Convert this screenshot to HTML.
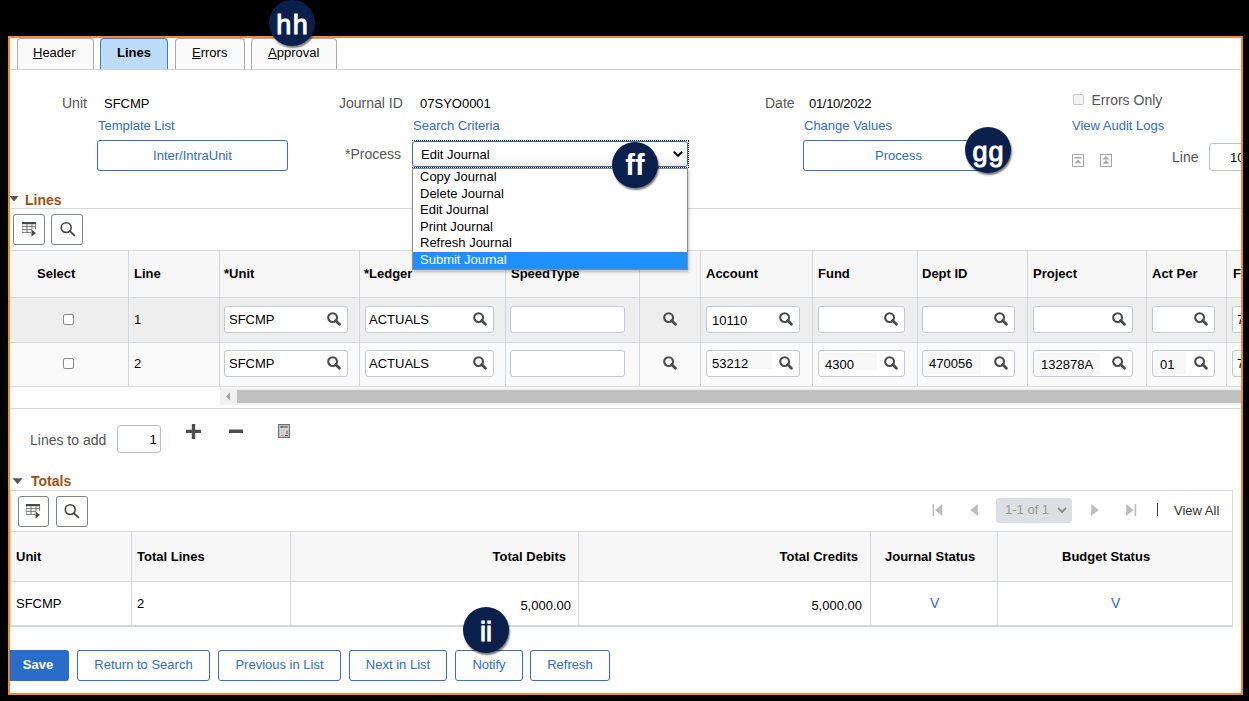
<!DOCTYPE html>
<html><head><meta charset="utf-8">
<style>
*{box-sizing:border-box;margin:0;padding:0}
html,body{width:1249px;height:701px;overflow:hidden;background:#000;font-family:"Liberation Sans",sans-serif;}
#frame{position:absolute;left:8px;top:36px;width:1236px;height:659px;background:#fff;border:2px solid #f7882f;}
.a{position:absolute}
.t{position:absolute;white-space:nowrap;line-height:13px;font-size:13px;color:#000}
.l{position:absolute;white-space:nowrap;line-height:14px;font-size:14px;color:#555}
.b{font-weight:bold}
.lnk{color:#2f6cc9}
.tab{position:absolute;top:38px;height:32px;background:#fafafa;border:1px solid #a9a9a9;border-bottom:none;border-radius:4px 4px 0 0}
.tab.on{background:#bcdcf8;border-color:#3a7bd5}
.btn{position:absolute;border:1px solid #3270cc;border-radius:3px;background:#fff;color:#2f6cc9;font-size:13px;text-align:center;line-height:28px;white-space:nowrap}
.hl{position:absolute;background:#d3d8de;height:1px}
.vl{position:absolute;background:#d3d8de;width:1px}
.inp{position:absolute;background:#fff;border:1px solid #c2c9d2;border-radius:3px;height:27px}
.badge{position:absolute;width:46px;height:46px;border-radius:50%;background:#0a1f4c;box-shadow:1px 2px 2px rgba(0,0,0,0.55);color:#fff;text-align:center;font-size:27px;font-weight:normal;-webkit-text-stroke:1px #fff;line-height:50px}
.ttl{font-size:14px;line-height:14px;color:#a0500f}
.ibtn{position:absolute;width:32px;height:31px;border:1px solid #7d848c;border-radius:3px;background:#fff}
</style></head><body>
<div id="frame"></div>
<svg width="0" height="0" style="position:absolute">
<defs>
<symbol id="lookico" viewBox="0 0 14 14"><circle cx="5.6" cy="5.6" r="4.4" stroke="#4a4a4a" stroke-width="2.1" fill="none"/><path d="M8.6 8.6 L12.4 12.2" stroke="#4a4a4a" stroke-width="2.8" stroke-linecap="round"/></symbol>
<symbol id="searchico" viewBox="0 0 17 17"><circle cx="7.2" cy="6.6" r="4.9" stroke="#444" stroke-width="1.6" fill="none"/><path d="M10.8 10.2 L15.4 14.4" stroke="#444" stroke-width="1.8" stroke-linecap="round"/></symbol>
<symbol id="gridico" viewBox="0 0 15 15"><rect x="0" y="0" width="14" height="2.2" fill="#4a4a4a"/><path d="M0 2 V11 M5 2 V11 M10 2 V7 M13.6 2 V7 M0 4.6 H14 M0 7.4 H10 M0 10.4 H9" stroke="#777" stroke-width="1" fill="none"/><path d="M9.5 7.5 L14 11 L9.5 14.5Z" fill="#4a4a4a"/></symbol>
</defs></svg>


<!-- tabs -->
<div class="tab" style="left:17px;width:77px"></div>
<div class="tab on" style="left:100px;width:68px"></div>
<div class="tab" style="left:175px;width:70px"></div>
<div class="tab" style="left:251px;width:86px"></div>
<div class="hl" style="left:10px;top:69px;width:1232px;background:#c9d0d8"></div>
<div class="t" style="left:33px;top:46px"><u>H</u>eader</div>
<div class="t b" style="left:117px;top:46px">Lines</div>
<div class="t" style="left:192px;top:46px"><u>E</u>rrors</div>
<div class="t" style="left:268px;top:46px"><u>A</u>pproval</div>

<!-- header fields -->
<div class="l" style="left:62px;top:96px">Unit</div>
<div class="t" style="left:104px;top:97px">SFCMP</div>
<div class="t lnk" style="left:98px;top:119px">Template List</div>
<div class="btn" style="left:97px;top:140px;width:191px;height:31px;line-height:30px">Inter/IntraUnit</div>

<div class="l" style="left:339px;top:96px">Journal ID</div>
<div class="t" style="left:420px;top:97px">07SYO0001</div>
<div class="t lnk" style="left:413px;top:119px">Search Criteria</div>
<div class="l" style="left:345px;top:147px">*Process</div>
<div class="a" style="left:412px;top:140px;width:277px;height:28px;border:1px dotted #222;border-left:none"></div><div class="a" style="left:412px;top:141px;width:276px;height:26px;border:1.5px solid #2a6ad2;border-radius:3px;background:linear-gradient(#fff 55%,#ededed)"></div>
<div class="t" style="left:421px;top:148px">Edit Journal</div>
<svg class="a" style="left:672px;top:150px" width="12" height="8" viewBox="0 0 12 8"><path d="M1.8 1.6 L6 5.8 L10.2 1.6" stroke="#000" stroke-width="2" fill="none"/></svg>

<div class="l" style="left:765px;top:96px">Date</div>
<div class="t" style="left:809px;top:97px;letter-spacing:-0.3px">01/10/2022</div>
<div class="t lnk" style="left:804px;top:119px">Change Values</div>
<div class="btn" style="left:803px;top:140px;width:191px;height:31px;line-height:30px">Process</div>

<div class="a" style="left:1073px;top:94px;width:11px;height:11px;border:1px solid #c8c8c8;border-radius:2px;background:#f4f4f4"></div>
<div class="l" style="left:1091.5px;top:93px">Errors Only</div>
<div class="t lnk" style="left:1072px;top:119px">View Audit Logs</div>
<svg class="a" style="left:1072px;top:154px" width="13" height="13" viewBox="0 0 13 13"><rect x="0.5" y="0.5" width="11" height="12" fill="#fff" stroke="#a8a8a8"/><rect x="2.6" y="2.8" width="6.8" height="1.8" fill="#acacac"/><path d="M2.6 9.2 L6 5.4 L9.4 9.2Z" fill="#acacac"/></svg>
<svg class="a" style="left:1100px;top:154px" width="13" height="13" viewBox="0 0 13 13"><rect x="0.5" y="0.5" width="11" height="12" fill="#fff" stroke="#a8a8a8"/><path d="M2.4 5.6 L5.9 2 L9.4 5.6Z M2.4 9.8 L5.9 6 L9.4 9.8Z" fill="#acacac"/></svg>
<div class="l" style="left:1172px;top:150px">Line</div>
<div class="inp" style="left:1209px;top:143px;width:60px;height:28px;border-color:#b9c2cc"></div>
<div class="t" style="left:1230px;top:151px">10</div>

<!-- Lines section -->
<svg class="a" style="left:9px;top:196px" width="10" height="6" viewBox="0 0 10 6"><path d="M0.5 0 L9.5 0 L5 5.5Z" fill="#555"/></svg>
<div class="t b ttl" style="left:25px;top:193px">Lines</div>
<div class="hl" style="left:10px;top:208px;width:1232px"></div>
<div class="ibtn" style="left:13px;top:214px"><svg class="a" style="left:8px;top:7px" width="15" height="15" viewBox="0 0 15 15"><use href="#gridico"/></svg></div>
<div class="ibtn" style="left:51px;top:214px"><svg class="a" style="left:7px;top:6px" width="17" height="17" viewBox="0 0 17 17"><use href="#searchico"/></svg></div>
<div class="a" style="left:10px;top:250px;width:1232px;height:47px;background:#f7f7f7"></div>
<div class="a" style="left:10px;top:297px;width:1232px;height:45px;background:#eeeeee"></div>
<div class="a" style="left:10px;top:342px;width:1232px;height:44px;background:#fafafa"></div>
<div class="hl" style="left:10px;top:250px;width:1232px"></div>
<div class="hl" style="left:10px;top:297px;width:1232px"></div>
<div class="hl" style="left:10px;top:342px;width:1232px"></div>
<div class="hl" style="left:10px;top:386px;width:1232px"></div>
<div class="vl" style="left:128px;top:250px;height:136px"></div>
<div class="vl" style="left:219px;top:250px;height:136px"></div>
<div class="vl" style="left:359px;top:250px;height:136px"></div>
<div class="vl" style="left:505px;top:250px;height:136px"></div>
<div class="vl" style="left:639px;top:250px;height:136px"></div>
<div class="vl" style="left:700px;top:250px;height:136px"></div>
<div class="vl" style="left:812px;top:250px;height:136px"></div>
<div class="vl" style="left:917px;top:250px;height:136px"></div>
<div class="vl" style="left:1027px;top:250px;height:136px"></div>
<div class="vl" style="left:1146px;top:250px;height:136px"></div>
<div class="vl" style="left:1226px;top:250px;height:136px"></div>
<div class="t b" style="left:37px;top:267px">Select</div>
<div class="t b" style="left:134px;top:267px">Line</div>
<div class="t b" style="left:224px;top:267px">*Unit</div>
<div class="t b" style="left:364px;top:267px">*Ledger</div>
<div class="t b" style="left:511px;top:267px">SpeedType</div>
<div class="t b" style="left:706px;top:267px">Account</div>
<div class="t b" style="left:818px;top:267px">Fund</div>
<div class="t b" style="left:922px;top:267px">Dept ID</div>
<div class="t b" style="left:1033px;top:267px">Project</div>
<div class="t b" style="left:1152px;top:267px">Act Per</div>
<div class="t b" style="left:1233px;top:267px">F</div>
<div class="a" style="left:63px;top:314px;width:11px;height:11px;border:1px solid #8a8a8a;border-radius:2px;background:#fff"></div>
<div class="t" style="left:134px;top:313px">1</div>
<div class="inp" style="left:224px;top:306px;width:124px"></div>
<div class="t" style="left:229px;top:313px">SFCMP</div>
<svg class="a" style="left:327px;top:312px" width="14" height="14" viewBox="0 0 14 14"><use href="#lookico"/></svg>
<div class="inp" style="left:365px;top:306px;width:129px"></div>
<div class="t" style="left:369px;top:313px">ACTUALS</div>
<svg class="a" style="left:473px;top:312px" width="14" height="14" viewBox="0 0 14 14"><use href="#lookico"/></svg>
<div class="inp" style="left:510px;top:306px;width:115px"></div>
<div class="inp" style="left:706px;top:306px;width:94px"></div>
<div class="t" style="left:712px;top:314px">10110</div>
<svg class="a" style="left:779px;top:312px" width="14" height="14" viewBox="0 0 14 14"><use href="#lookico"/></svg>
<div class="inp" style="left:818px;top:306px;width:87px"></div>
<svg class="a" style="left:884px;top:312px" width="14" height="14" viewBox="0 0 14 14"><use href="#lookico"/></svg>
<div class="inp" style="left:922px;top:306px;width:93px"></div>
<svg class="a" style="left:994px;top:312px" width="14" height="14" viewBox="0 0 14 14"><use href="#lookico"/></svg>
<div class="inp" style="left:1033px;top:306px;width:100px"></div>
<svg class="a" style="left:1112px;top:312px" width="14" height="14" viewBox="0 0 14 14"><use href="#lookico"/></svg>
<div class="inp" style="left:1152px;top:306px;width:63px"></div>
<svg class="a" style="left:1194px;top:312px" width="14" height="14" viewBox="0 0 14 14"><use href="#lookico"/></svg>
<div class="inp" style="left:1232px;top:306px;width:68px"></div>
<div class="t" style="left:1237px;top:313px">7</div>
<svg class="a" style="left:663px;top:312px" width="14" height="14" viewBox="0 0 14 14"><use href="#lookico"/></svg>
<div class="a" style="left:63px;top:358px;width:11px;height:11px;border:1px solid #8a8a8a;border-radius:2px;background:#fff"></div>
<div class="t" style="left:134px;top:357px">2</div>
<div class="inp" style="left:224px;top:350px;width:124px"></div>
<div class="t" style="left:229px;top:357px">SFCMP</div>
<svg class="a" style="left:327px;top:356px" width="14" height="14" viewBox="0 0 14 14"><use href="#lookico"/></svg>
<div class="inp" style="left:365px;top:350px;width:129px"></div>
<div class="t" style="left:369px;top:357px">ACTUALS</div>
<svg class="a" style="left:473px;top:356px" width="14" height="14" viewBox="0 0 14 14"><use href="#lookico"/></svg>
<div class="inp" style="left:510px;top:350px;width:115px"></div>
<div class="inp" style="left:706px;top:350px;width:94px"></div>

<svg class="a" style="left:779px;top:356px" width="14" height="14" viewBox="0 0 14 14"><use href="#lookico"/></svg>
<div class="inp" style="left:818px;top:350px;width:87px"></div>

<svg class="a" style="left:884px;top:356px" width="14" height="14" viewBox="0 0 14 14"><use href="#lookico"/></svg>
<div class="inp" style="left:922px;top:350px;width:93px"></div>

<svg class="a" style="left:994px;top:356px" width="14" height="14" viewBox="0 0 14 14"><use href="#lookico"/></svg>
<div class="inp" style="left:1033px;top:350px;width:100px"></div>

<svg class="a" style="left:1112px;top:356px" width="14" height="14" viewBox="0 0 14 14"><use href="#lookico"/></svg>
<div class="inp" style="left:1152px;top:350px;width:63px"></div>

<svg class="a" style="left:1194px;top:356px" width="14" height="14" viewBox="0 0 14 14"><use href="#lookico"/></svg>
<div class="inp" style="left:1232px;top:350px;width:68px"></div>
<div class="t" style="left:1237px;top:357px">7</div>
<svg class="a" style="left:663px;top:356px" width="14" height="14" viewBox="0 0 14 14"><use href="#lookico"/></svg>
<div class="a" style="left:709px;top:352px;width:63px;height:17px;background:#f8f8f8"></div><div class="a" style="left:820px;top:353px;width:57px;height:17px;background:#f8f8f8"></div><div class="a" style="left:924px;top:352px;width:57px;height:22px;background:#f8f8f8"></div><div class="a" style="left:1036px;top:353px;width:64px;height:22px;background:#f8f8f8"></div><div class="a" style="left:1155px;top:352px;width:31px;height:22px;background:#f8f8f8"></div>
<div class="t" style="left:712px;top:357px">53212</div>
<div class="t" style="left:825px;top:357.5px">4300</div>
<div class="t" style="left:929px;top:356.5px">470056</div>
<div class="t" style="left:1041px;top:357.5px">132878A</div>
<div class="t" style="left:1160px;top:357.5px">01</div>
<div class="a" style="left:220px;top:388px;width:1022px;height:17px;background:#f1f1f1"></div>
<svg class="a" style="left:225px;top:392px" width="6" height="9" viewBox="0 0 6 9"><path d="M5 0.5 L1 4.5 L5 8.5Z" fill="#a3a3a3"/></svg>
<div class="a" style="left:237px;top:390px;width:1005px;height:13px;background:#c1c1c1"></div>
<div class="hl" style="left:10px;top:408px;width:1232px"></div>
<!-- lines to add -->
<div class="l" style="left:30px;top:433px">Lines to add</div>
<div class="inp" style="left:117px;top:425px;width:44px;height:28px;border-color:#b9c2cc"></div>
<div class="t" style="left:149.5px;top:433px">1</div>
<svg class="a" style="left:186px;top:424px" width="15" height="15" viewBox="0 0 15 15"><path d="M7.5 0.5 V14.5 M0.5 7.4 H14.5" stroke="#4d4d4d" stroke-width="3.4" stroke-linecap="round"/></svg>
<svg class="a" style="left:229px;top:428px" width="14" height="6" viewBox="0 0 14 6"><path d="M1 3.3 H13" stroke="#4d4d4d" stroke-width="3.6" stroke-linecap="round"/></svg>
<svg class="a" style="left:278px;top:424px" width="12" height="14" viewBox="0 0 12 14"><rect x="0.5" y="0.5" width="11" height="13" fill="#d9d9d9" stroke="#707070"/><rect x="1.3" y="1.3" width="9.4" height="11.4" fill="none" stroke="#b8b8b8" stroke-width="0.6"/><rect x="2.2" y="2.2" width="7.6" height="1.6" fill="#5a5a5a"/><rect x="5" y="2.4" width="4.6" height="1.2" fill="#6cc36c"/><path d="M3 5.5 V10 M5.5 5.5 V10 M3 6 H8 M3 8 H8 M3 9.8 H8" stroke="#c4c4c4" stroke-width="0.6"/><rect x="8.3" y="6.6" width="1.5" height="3.6" fill="#e25b5b"/><rect x="7" y="11" width="2.8" height="1" fill="#444"/><rect x="3" y="11" width="3" height="0.8" fill="#999"/></svg>
<!-- totals -->
<svg class="a" style="left:12px;top:478px" width="11" height="7" viewBox="0 0 11 7"><path d="M0.5 0.3 L10.5 0.3 L5.5 6Z" fill="#555"/></svg>
<div class="t b ttl" style="left:31px;top:474px">Totals</div>
<div class="hl" style="left:10px;top:490px;width:1223px"></div>
<div class="vl" style="left:10px;top:490px;height:41px"></div>
<div class="vl" style="left:1232px;top:490px;height:41px"></div>
<div class="ibtn" style="left:18px;top:496px;width:31px"><svg class="a" style="left:7px;top:7px" width="15" height="15" viewBox="0 0 15 15"><use href="#gridico"/></svg></div>
<div class="ibtn" style="left:56px;top:496px"><svg class="a" style="left:6px;top:6px" width="17" height="17" viewBox="0 0 17 17"><use href="#searchico"/></svg></div>
<svg class="a" style="left:932px;top:504px" width="11" height="12" viewBox="0 0 11 12"><rect x="0.5" y="0" width="1.6" height="12" fill="#bdbdbd"/><path d="M10.4 0 L3 6 L10.4 12Z" fill="#bdbdbd"/></svg>
<svg class="a" style="left:970px;top:504px" width="8" height="12" viewBox="0 0 8 12"><path d="M7.8 0 L0.2 6 L7.8 12Z" fill="#bdbdbd"/></svg>
<div class="a" style="left:996px;top:498px;width:76px;height:25px;background:#dcdfe3;border-radius:3px"></div>
<div class="t" style="left:1005px;top:503px;color:#9a9a9a">1-1 of 1</div>
<svg class="a" style="left:1057px;top:507px" width="10" height="7" viewBox="0 0 10 7"><path d="M1 1 L5 5 L9 1" stroke="#8c8c8c" stroke-width="1.8" fill="none"/></svg>
<svg class="a" style="left:1091px;top:504px" width="8" height="12" viewBox="0 0 8 12"><path d="M0.2 0 L7.8 6 L0.2 12Z" fill="#bdbdbd"/></svg>
<svg class="a" style="left:1126px;top:504px" width="11" height="12" viewBox="0 0 11 12"><path d="M0.2 0 L7.6 6 L0.2 12Z" fill="#bdbdbd"/><rect x="8.6" y="0" width="1.6" height="12" fill="#bdbdbd"/></svg>
<div class="a" style="left:1157px;top:503px;width:1px;height:13px;background:#444"></div>
<div class="t" style="left:1174px;top:504px;color:#333">View All</div>
<div class="a" style="left:10px;top:531px;width:1223px;height:50px;background:#f7f7f7"></div>
<div class="hl" style="left:10px;top:531px;width:1223px;height:1px"></div>
<div class="hl" style="left:10px;top:581px;width:1223px;height:1px"></div>
<div class="hl" style="left:10px;top:625px;width:1223px;height:2px"></div>
<div class="vl" style="left:10px;top:531px;height:95px"></div>
<div class="vl" style="left:131px;top:531px;height:95px"></div>
<div class="vl" style="left:290px;top:531px;height:95px"></div>
<div class="vl" style="left:578px;top:531px;height:95px"></div>
<div class="vl" style="left:870px;top:531px;height:95px"></div>
<div class="vl" style="left:997px;top:531px;height:95px"></div>
<div class="vl" style="left:1232px;top:531px;height:95px"></div>
<div class="t b" style="left:16px;top:550px">Unit</div>
<div class="t b" style="left:137px;top:550px">Total Lines</div>
<div class="t b" style="left:492px;top:550px;width:74px;text-align:right">Total Debits</div>
<div class="t b" style="left:757px;top:550px;width:101px;text-align:right">Total Credits</div>
<div class="t b" style="left:885px;top:550px">Journal Status</div>
<div class="t b" style="left:1062px;top:550px">Budget Status</div>
<div class="t" style="left:16px;top:597px">SFCMP</div>
<div class="t" style="left:137px;top:597px">2</div>
<div class="t" style="left:471px;top:599px;width:100px;text-align:right">5,000.00</div>
<div class="t" style="left:762px;top:599px;width:100px;text-align:right">5,000.00</div>
<div class="t lnk" style="left:930px;top:596px;font-size:14px;line-height:14px">V</div>
<div class="t lnk" style="left:1111px;top:596px;font-size:14px;line-height:14px">V</div>
<div class="a" style="left:9px;top:650px;width:60px;height:31px;background:#2a6dc8;border-radius:0 3px 3px 0;color:#fff;font-weight:bold;font-size:13px;line-height:30px;text-align:center;padding-right:2px">Save</div>
<div class="btn" style="left:77px;top:650px;width:133px;height:31px">Return to Search</div>
<div class="btn" style="left:218px;top:650px;width:123px;height:31px">Previous in List</div>
<div class="btn" style="left:349px;top:650px;width:98px;height:31px">Next in List</div>
<div class="btn" style="left:455px;top:650px;width:68px;height:31px">Notify</div>
<div class="btn" style="left:530px;top:650px;width:80px;height:31px">Refresh</div>
<div class="a" style="left:412px;top:168px;width:276px;height:102px;background:#fff;border:1px solid #8c8c8c;box-shadow:1px 2px 3px rgba(0,0,0,0.25)"></div>
<div class="a" style="left:413px;top:252px;width:274px;height:17px;background:#1e90ff"></div>
<div class="t" style="left:420px;top:170.0px;color:#000">Copy Journal</div>
<div class="t" style="left:420px;top:186.5px;color:#000">Delete Journal</div>
<div class="t" style="left:420px;top:203.0px;color:#000">Edit Journal</div>
<div class="t" style="left:420px;top:219.5px;color:#000">Print Journal</div>
<div class="t" style="left:420px;top:236.0px;color:#000">Refresh Journal</div>
<div class="t" style="left:420px;top:252.5px;color:#fff">Submit Journal</div>
<div class="a" style="left:1243px;top:36px;width:6px;height:665px;background:#000"></div>
<div class="a" style="left:8px;top:36px;width:1235px;height:1px;background:#f7882f"></div><div class="a" style="left:8px;top:37px;width:1235px;height:1px;background:rgba(247,136,47,0.55)"></div>
<div class="a" style="left:8px;top:693px;width:1235px;height:2px;background:#f7882f"></div>
<div class="a" style="left:8px;top:36px;width:1px;height:658px;background:#f7882f"></div><div class="a" style="left:9px;top:36px;width:1px;height:658px;background:rgba(247,136,47,0.6)"></div>
<div class="a" style="left:1241px;top:36px;width:2px;height:658px;background:#f7882f"></div>
<div class="badge" style="left:269px;top:-0.4px;letter-spacing:1.5px;text-indent:1.5px">hh</div>
<div class="badge" style="left:612px;top:142px;font-weight:bold;-webkit-text-stroke:0;font-size:29px;line-height:47px">ff</div>
<div class="badge" style="left:965px;top:127px;letter-spacing:1px;text-indent:1px">gg</div>
<div class="badge" style="left:463px;top:606.7px;">ii</div>
</body></html>
